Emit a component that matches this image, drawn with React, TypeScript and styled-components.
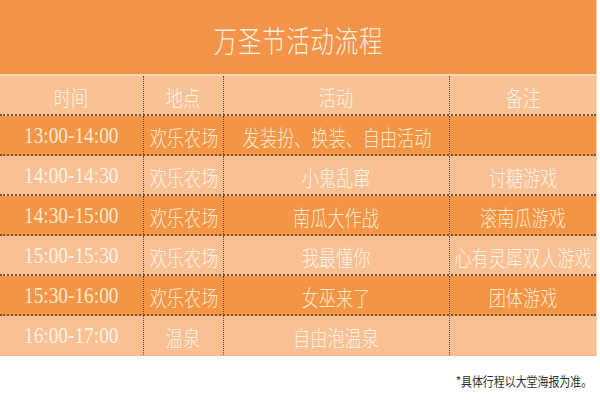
import React from "react";
import styled, { createGlobalStyle } from "styled-components";

const GlobalStyle = createGlobalStyle`
  html, body {
    margin: 0;
    padding: 0;
    background: #ffffff;
  }
  body {
    width: 600px;
    height: 400px;
    overflow: hidden;
    font-family: "Liberation Serif", "Noto Sans CJK SC", serif;
  }
`;

const Page = styled.div`
  width: 600px;
  height: 400px;
  display: flex;
  flex-direction: column;
`;

const Board = styled.div`
  width: 597px;
  border-right: 1px solid #f6d2ae;
  box-sizing: border-box;
  display: flex;
  flex-direction: column;
`;

const TitleBand = styled.div`
  height: 74px;
  background: #f4944a;
  border-bottom: 2px solid #fad6b4;
  display: flex;
  align-items: center;
  justify-content: center;
`;

const Title = styled.span`
  display: inline-block;
  color: #fdf0dc;
  font-family: "Noto Sans CJK SC", sans-serif;
  font-weight: 300;
  font-size: 30px;
  letter-spacing: 1px;
  transform: scaleX(0.78);
  margin-top: 4px;
`;

const Row = styled.div<{ $tone: "dark" | "light" | "head" }>`
  display: grid;
  grid-template-columns: 144px 80px 226px 146px;
  height: 40px;
  box-sizing: border-box;
  background: ${(p) =>
    p.$tone === "dark" ? "#f49445" : p.$tone === "head" ? "#f8c294" : "#f8c093"};
  border-bottom: 2px dotted #7a5440;
  color: ${(p) => (p.$tone === "dark" ? "#fce9cf" : "#fdf2e6")};
  &:last-child {
    border-bottom: 1px solid #f3b482;
  }
`;

const Cell = styled.div<{ $last?: boolean }>`
  display: flex;
  align-items: center;
  justify-content: center;
  overflow: visible;
  white-space: nowrap;
  border-right: ${(p) => (p.$last ? "none" : "1px dotted #6e4a36")};
`;

const Label = styled.span<{ $kind: "time" | "cjk" }>`
  display: inline-block;
  font-family: ${(p) =>
    p.$kind === "time"
      ? '"Liberation Serif", serif'
      : '"Noto Sans CJK SC", sans-serif'};
  font-weight: ${(p) => (p.$kind === "time" ? 400 : 300)};
  font-size: ${(p) => (p.$kind === "time" ? "23px" : "22px")};
  transform: scaleX(${(p) => (p.$kind === "time" ? 0.84 : 0.78)});
  margin-top: 1px;
`;

const Note = styled.div`
  align-self: flex-end;
  margin: 15px 8px 0 0;
  color: #2e2e2e;
  font-family: "Noto Sans CJK SC", sans-serif;
  font-size: 13px;
  transform: scaleX(0.84);
  transform-origin: right center;
`;

type Item = { time: string; place: string; act: string; memo: string };

const items: Item[] = [
  { time: "13:00-14:00", place: "欢乐农场", act: "发装扮、换装、自由活动", memo: "" },
  { time: "14:00-14:30", place: "欢乐农场", act: "小鬼乱窜", memo: "讨糖游戏" },
  { time: "14:30-15:00", place: "欢乐农场", act: "南瓜大作战", memo: "滚南瓜游戏" },
  { time: "15:00-15:30", place: "欢乐农场", act: "我最懂你", memo: "心有灵犀双人游戏" },
  { time: "15:30-16:00", place: "欢乐农场", act: "女巫来了", memo: "团体游戏" },
  { time: "16:00-17:00", place: "温泉", act: "自由泡温泉", memo: "" },
];

export default function App() {
  return (
    <Page>
      <GlobalStyle />
      <Board>
        <TitleBand>
          <Title>万圣节活动流程</Title>
        </TitleBand>
        <Row $tone="head">
          <Cell><Label $kind="cjk">时间</Label></Cell>
          <Cell><Label $kind="cjk">地点</Label></Cell>
          <Cell><Label $kind="cjk">活动</Label></Cell>
          <Cell $last><Label $kind="cjk">备注</Label></Cell>
        </Row>
        {items.map((it, i) => (
          <Row key={it.time} $tone={i % 2 === 0 ? "dark" : "light"}>
            <Cell><Label $kind="time">{it.time}</Label></Cell>
            <Cell><Label $kind="cjk">{it.place}</Label></Cell>
            <Cell><Label $kind="cjk">{it.act}</Label></Cell>
            <Cell $last><Label $kind="cjk">{it.memo}</Label></Cell>
          </Row>
        ))}
      </Board>
      <Note>*具体行程以大堂海报为准。</Note>
    </Page>
  );
}
